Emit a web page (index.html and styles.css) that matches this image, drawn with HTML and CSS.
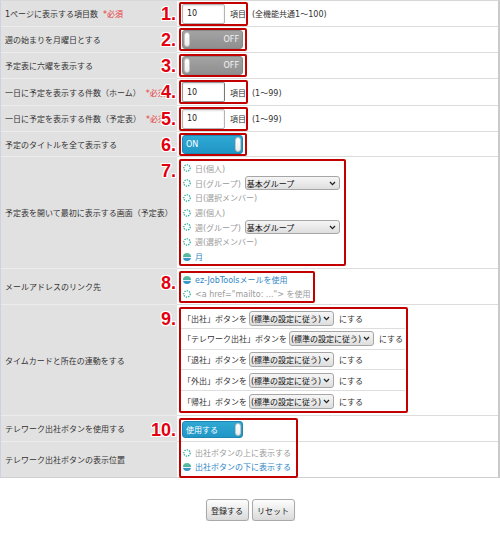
FILE: index.html
```html
<!DOCTYPE html>
<html lang="ja">
<head>
<meta charset="utf-8">
<title>個人設定</title>
<link rel="stylesheet" href="styles.css">
</head>
<body>
<div class="settings">
  <div class="lbl">1ページに表示する項目数<span class="req">*必須</span></div>
  <div class="val">
    <div class="mark"><span class="num">1.</span><input class="inp" type="text" value="10"><span class="unit">項目</span></div>
    <span class="note">(全機能共通1～100)</span>
  </div>

  <div class="lbl">週の始まりを月曜日とする</div>
  <div class="val">
    <div class="mark tgbox"><span class="num">2.</span><span class="tg off"><span class="knob"></span><span class="txt">OFF</span></span></div>
  </div>

  <div class="lbl">予定表に六曜を表示する</div>
  <div class="val">
    <div class="mark tgbox"><span class="num">3.</span><span class="tg off"><span class="knob"></span><span class="txt">OFF</span></span></div>
  </div>

  <div class="lbl">一日に予定を表示する件数（ホーム）<span class="req">*必須</span></div>
  <div class="val">
    <div class="mark"><span class="num">4.</span><input class="inp focus" type="text" value="10"><span class="unit">項目</span></div>
    <span class="note">(1～99)</span>
  </div>

  <div class="lbl">一日に予定を表示する件数（予定表）<span class="req">*必須</span></div>
  <div class="val">
    <div class="mark"><span class="num">5.</span><input class="inp" type="text" value="10"><span class="unit">項目</span></div>
    <span class="note">(1～99)</span>
  </div>

  <div class="lbl">予定のタイトルを全て表示する</div>
  <div class="val">
    <div class="mark tgbox"><span class="num">6.</span><span class="tg on"><span class="txt">ON</span><span class="knob"></span></span></div>
  </div>

  <div class="lbl">予定表を開いて最初に表示する画面（予定表）</div>
  <div class="val">
    <div class="mark col box7"><span class="num">7.</span>
      <div class="opt"><svg class="rd" viewBox="0 0 9 9"><circle cx="4.5" cy="4.5" r="3.6" fill="none" stroke="#2fae9f" stroke-width="1.5" stroke-dasharray="1.5 1.2"/></svg>日(個人)</div>
      <div class="opt"><svg class="rd" viewBox="0 0 9 9"><circle cx="4.5" cy="4.5" r="3.6" fill="none" stroke="#2fae9f" stroke-width="1.5" stroke-dasharray="1.5 1.2"/></svg>日(グループ)<span class="sel grp"><span>基本グループ</span><svg class="chev" viewBox="0 0 7 5"><polyline points="1,1 3.5,3.6 6,1" fill="none" stroke="#222" stroke-width="1.3"/></svg></span></div>
      <div class="opt"><svg class="rd" viewBox="0 0 9 9"><circle cx="4.5" cy="4.5" r="3.6" fill="none" stroke="#2fae9f" stroke-width="1.5" stroke-dasharray="1.5 1.2"/></svg>日(選択メンバー)</div>
      <div class="opt"><svg class="rd" viewBox="0 0 9 9"><circle cx="4.5" cy="4.5" r="3.6" fill="none" stroke="#2fae9f" stroke-width="1.5" stroke-dasharray="1.5 1.2"/></svg>週(個人)</div>
      <div class="opt"><svg class="rd" viewBox="0 0 9 9"><circle cx="4.5" cy="4.5" r="3.6" fill="none" stroke="#2fae9f" stroke-width="1.5" stroke-dasharray="1.5 1.2"/></svg>週(グループ)<span class="sel grp"><span>基本グループ</span><svg class="chev" viewBox="0 0 7 5"><polyline points="1,1 3.5,3.6 6,1" fill="none" stroke="#222" stroke-width="1.3"/></svg></span></div>
      <div class="opt"><svg class="rd" viewBox="0 0 9 9"><circle cx="4.5" cy="4.5" r="3.6" fill="none" stroke="#2fae9f" stroke-width="1.5" stroke-dasharray="1.5 1.2"/></svg>週(選択メンバー)</div>
      <div class="opt on"><span class="rd chk"></span>月</div>
    </div>
  </div>

  <div class="lbl">メールアドレスのリンク先</div>
  <div class="val">
    <div class="mark col box8"><span class="num">8.</span>
      <div class="opt on short"><span class="rd chk"></span>ez-JobToolsメールを使用</div>
      <div class="opt short"><svg class="rd" viewBox="0 0 9 9"><circle cx="4.5" cy="4.5" r="3.6" fill="none" stroke="#2fae9f" stroke-width="1.5" stroke-dasharray="1.5 1.2"/></svg>&lt;a href="mailto: ..."&gt; を使用</div>
    </div>
  </div>

  <div class="lbl">タイムカードと所在の連動をする</div>
  <div class="val">
    <div class="mark col box9"><span class="num">9.</span>
      <div class="tc">「出社」ボタンを<span class="sel std"><span>(標準の設定に従う)</span><svg class="chev" viewBox="0 0 7 5"><polyline points="1,1 3.5,3.6 6,1" fill="none" stroke="#222" stroke-width="1.3"/></svg></span><span class="after">にする</span></div>
      <div class="tc">「テレワーク出社」ボタンを<span class="sel std"><span>(標準の設定に従う)</span><svg class="chev" viewBox="0 0 7 5"><polyline points="1,1 3.5,3.6 6,1" fill="none" stroke="#222" stroke-width="1.3"/></svg></span><span class="after">にする</span></div>
      <div class="tc">「退社」ボタンを<span class="sel std"><span>(標準の設定に従う)</span><svg class="chev" viewBox="0 0 7 5"><polyline points="1,1 3.5,3.6 6,1" fill="none" stroke="#222" stroke-width="1.3"/></svg></span><span class="after">にする</span></div>
      <div class="tc">「外出」ボタンを<span class="sel std"><span>(標準の設定に従う)</span><svg class="chev" viewBox="0 0 7 5"><polyline points="1,1 3.5,3.6 6,1" fill="none" stroke="#222" stroke-width="1.3"/></svg></span><span class="after">にする</span></div>
      <div class="tc">「帰社」ボタンを<span class="sel std"><span>(標準の設定に従う)</span><svg class="chev" viewBox="0 0 7 5"><polyline points="1,1 3.5,3.6 6,1" fill="none" stroke="#222" stroke-width="1.3"/></svg></span><span class="after">にする</span></div>
    </div>
  </div>

  <div class="lbl">テレワーク出社ボタンを使用する</div>
  <div class="val v10">
    <span class="tg on short"><span class="txt">使用する</span><span class="knob"></span></span>
    <div class="mark span2"><span class="num">10.</span></div>
  </div>

  <div class="lbl last">テレワーク出社ボタンの表示位置</div>
  <div class="val last v11">
    <div class="opt short"><svg class="rd" viewBox="0 0 9 9"><circle cx="4.5" cy="4.5" r="3.6" fill="none" stroke="#2fae9f" stroke-width="1.5" stroke-dasharray="1.5 1.2"/></svg>出社ボタンの上に表示する</div>
    <div class="opt on short"><span class="rd chk"></span>出社ボタンの下に表示する</div>
  </div>
</div>

<div class="actions">
  <button class="btn" type="button">登録する</button>
  <button class="btn" type="button">リセット</button>
</div>
</body>
</html>
```

FILE: styles.css
```css
* { box-sizing: border-box; }

html, body {
  margin: 0;
  padding: 0;
  background: #fff;
}

body {
  width: 500px;
  font-family: "DejaVu Sans", "Noto Sans CJK JP", sans-serif;
  font-size: 8px;
  color: #333;
}

.settings {
  display: grid;
  grid-template-columns: 176px 1fr;
  grid-template-rows: 26px 26px 26px 27px 26px 25px 112px 36px 111px 26px 36px;
  width: 500px;
  border-top: 1px solid #d8d8d8;
  border-left: 1px solid #cdd2e0;
  border-right: 2px solid #cacaca;
}

.lbl {
  display: flex;
  align-items: center;
  padding-left: 4px;
  background: #e1e1e1;
  border-bottom: 1px solid #ececec;
  white-space: nowrap;
  color: #333;
}

.val {
  display: flex;
  align-items: center;
  padding-left: 2px;
  background: #fff;
  border-bottom: 1px solid #dcdcdc;
  white-space: nowrap;
  position: relative;
}

.lbl.last, .val.last { border-bottom: 1px solid #cfcfcf; }

.req {
  margin-left: 5px;
  color: #e8383d;
}

/* annotation boxes */
.mark {
  position: relative;
  display: flex;
  align-items: center;
  border: 2px solid #c30000;
  border-radius: 2px;
  padding-left: 1px;
}

.mark.tgbox { padding-right: 2px; }

.mark.col {
  flex-direction: column;
  align-items: stretch;
  padding-left: 0;
}

.box7 { width: 167px; }
.box8 { width: 136px; }
.box9 { width: 229px; }

.num {
  position: absolute;
  right: calc(100% + 5px);
  top: 1px;
  font-family: "Liberation Sans", Arial, sans-serif;
  font-weight: bold;
  font-size: 18px;
  line-height: 18px;
  color: #e3000f;
  text-shadow:
    1px 0 0 #fff, -1px 0 0 #fff, 0 1px 0 #fff, 0 -1px 0 #fff,
    1px 1px 0 #fff, -1px -1px 0 #fff, 1px -1px 0 #fff, -1px 1px 0 #fff;
}

.mark.span2 {
  position: absolute;
  top: 2px;
  left: 2px;
  width: 119px;
  height: 60px;
  pointer-events: none;
  z-index: 2;
}

/* text inputs */
.inp {
  width: 43px;
  height: 20px;
  margin: 0;
  padding: 0 4px;
  border: 1px solid #b4b4b4;
  border-radius: 2px;
  background: #fff;
  box-shadow: inset 0 1px 2px rgba(0, 0, 0, 0.12);
  font-family: "DejaVu Sans", sans-serif;
  font-size: 8px;
  color: #222;
  outline: none;
}

.inp.focus {
  border-color: #9a9a9a;
  border-right-color: #777;
}

.unit {
  margin-left: 5px;
  color: #333;
}

.note {
  margin-left: 4px;
  color: #333;
}

/* toggles */
.tg {
  display: flex;
  align-items: stretch;
  width: 61px;
  height: 19px;
  padding: 1px;
  border-radius: 3px;
  color: #fff;
}

.tg.off {
  background: linear-gradient(#a3a3a3, #8f8f8f);
  border: 1px solid #878787;
}

.tg.on {
  background: linear-gradient(#2fa8d4, #2096c4);
  border: 1px solid #1d87b3;
}

.tg.short {
  height: 17px;
  margin-left: 3px;
  margin-top: 1px;
}

.tg .txt {
  display: flex;
  align-items: center;
}

.tg.off .txt {
  margin-left: auto;
  margin-right: 2px;
  color: #f4f4f4;
}

.tg.on .txt {
  margin-left: 2px;
  margin-right: auto;
}

.knob {
  width: 6px;
  flex: none;
  background: linear-gradient(#ffffff, #ececec);
  border: 1px solid #c4c4c4;
  border-radius: 3px;
}

/* radio options */
.opt {
  display: flex;
  align-items: center;
  height: 14.7px;
  padding-left: 2px;
  color: #9a9a9a;
}

.opt.short { height: 14px; }

.opt.on { color: #2f86c6; }

.rd {
  width: 8px;
  height: 8px;
  flex: none;
  margin-right: 4px;
}

.rd.chk {
  display: inline-block;
  border-radius: 50%;
  background: linear-gradient(#62c19b 0, #4fb3a6 44%, #e6f4f4 44%, #e6f4f4 58%, #3a9bcb 58%, #3592c6 100%);
}

.v11 {
  flex-direction: column;
  align-items: stretch;
  justify-content: center;
  padding-left: 4px;
}

/* selects */
.sel {
  display: inline-flex;
  align-items: center;
  justify-content: space-between;
  height: 14px;
  margin-left: 4px;
  padding: 0 3px 0 1px;
  border: 1px solid #a6a6a6;
  border-radius: 3px;
  background: linear-gradient(#f6f6f6, #dedede);
  color: #111;
}

.sel.grp { width: 95px; }

.sel.std {
  width: 85px;
  margin-left: 2px;
  height: 15px;
}

.chev {
  width: 7px;
  height: 5px;
  flex: none;
}

/* timecard rows */
.tc {
  display: flex;
  align-items: center;
  height: 20.6px;
  padding-left: 2px;
  margin-right: 1px;
  border-bottom: 1px solid #dedede;
  color: #333;
}

.tc:last-child { border-bottom: none; }

.after { margin-left: 5px; }

/* buttons */
.actions {
  display: flex;
  justify-content: center;
  gap: 3px;
  margin-top: 21px;
}

.btn {
  width: 43px;
  height: 22px;
  padding: 0;
  border: 1px solid #a9a9a9;
  border-radius: 3px;
  background: linear-gradient(#fdfdfd, #dadada);
  box-shadow: 0 1px 1px rgba(0, 0, 0, 0.15);
  font-family: "Noto Sans CJK JP", sans-serif;
  font-size: 8px;
  color: #222;
}
```
